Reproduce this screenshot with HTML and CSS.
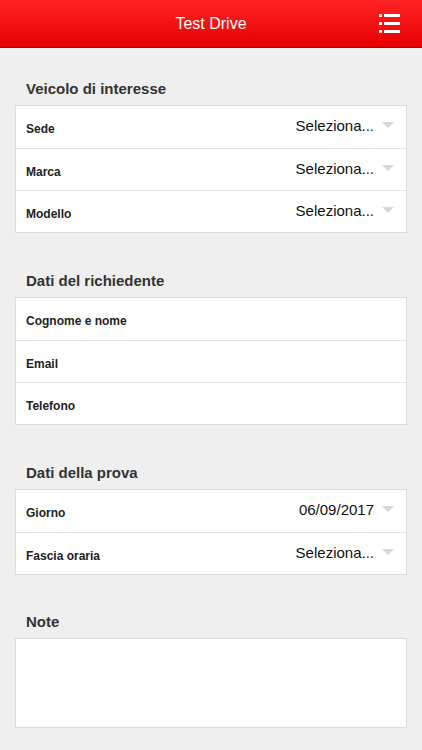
FILE: index.html
```html
<!DOCTYPE html>
<html lang="it">
<head>
    <meta charset="UTF-8">
    <meta name="viewport" content="width=device-width, initial-scale=1.0">
    <title>Test Drive</title>
    <link rel="stylesheet" href="styles.css">
</head>
<body>
    <header class="topbar">
        <h1 class="topbar-title">Test Drive</h1>
        <svg class="topbar-menu" width="21" height="19" viewBox="0 0 21 19">
            <rect x="0" y="0" width="3" height="3" fill="#fff"/>
            <rect x="5" y="0" width="16" height="3" fill="#fff"/>
            <rect x="0" y="8" width="3" height="3" fill="#fff"/>
            <rect x="5" y="8" width="16" height="3" fill="#fff"/>
            <rect x="0" y="16" width="3" height="3" fill="#fff"/>
            <rect x="5" y="16" width="16" height="3" fill="#fff"/>
        </svg>
    </header>

    <main class="form">
        <section class="group">
            <h2 class="group-title">Veicolo di interesse</h2>
            <div class="card">
                <div class="row"><span class="label">Sede</span><span class="value">Seleziona...</span><span class="caret"></span></div>
                <div class="row"><span class="label">Marca</span><span class="value">Seleziona...</span><span class="caret"></span></div>
                <div class="row"><span class="label">Modello</span><span class="value">Seleziona...</span><span class="caret"></span></div>
            </div>
        </section>

        <section class="group">
            <h2 class="group-title">Dati del richiedente</h2>
            <div class="card">
                <div class="row"><span class="label">Cognome e nome</span></div>
                <div class="row"><span class="label">Email</span></div>
                <div class="row"><span class="label">Telefono</span></div>
            </div>
        </section>

        <section class="group">
            <h2 class="group-title">Dati della prova</h2>
            <div class="card">
                <div class="row"><span class="label">Giorno</span><span class="value">06/09/2017</span><span class="caret"></span></div>
                <div class="row"><span class="label">Fascia oraria</span><span class="value">Seleziona...</span><span class="caret"></span></div>
            </div>
        </section>

        <section class="group group-notes">
            <h2 class="group-title">Note</h2>
            <textarea class="notes"></textarea>
        </section>
    </main>
</body>
</html>
```

FILE: styles.css
```css
body {
    margin: 0;
    background-color: #efefef;
    font-family: "Liberation Sans", Arial, sans-serif;
    color: #333;
}

.topbar {
    height: 47px;
    border-bottom: 1px solid #6e1a1a;
    background: linear-gradient(#ff2424, #e50000);
    display: flex;
    align-items: center;
    justify-content: center;
    position: relative;
}

.topbar-title {
    margin: 0;
    font-size: 16px;
    font-weight: normal;
    color: #fff;
}

.topbar-menu {
    position: absolute;
    right: 22px;
    top: 14px;
}

.form {
    padding: 0 15px 20px;
}

.group {
    margin-top: 38px;
}

.group:first-child {
    margin-top: 31px;
}

.group-notes {
    margin-top: 37px;
}

.group-title {
    margin: 0 0 6px 11px;
    font-size: 15px;
    line-height: 20px;
    font-weight: bold;
    color: #333;
}

.card {
    background-color: #fff;
    border: 1px solid #dcdcdc;
}

.row {
    height: 41px;
    display: flex;
    align-items: center;
    padding: 0 12px 0 10px;
    border-top: 1px solid #e2e2e2;
}

.row:first-child {
    height: 42px;
    border-top: none;
}

.label {
    flex: 1;
    font-size: 12px;
    font-weight: bold;
    color: #222;
    margin-top: 4px;
}

.value {
    font-size: 15px;
    color: #111;
    margin-bottom: 3px;
}

.caret {
    width: 0;
    height: 0;
    margin: 0 0 4px 8px;
    border-left: 6px solid transparent;
    border-right: 6px solid transparent;
    border-top: 6px solid #d8d8d8;
}

.notes {
    display: block;
    width: 100%;
    height: 90px;
    box-sizing: border-box;
    margin: 0;
    border: 1px solid #dcdcdc;
    border-radius: 0;
    background-color: #fff;
    resize: none;
    outline: none;
}
```
